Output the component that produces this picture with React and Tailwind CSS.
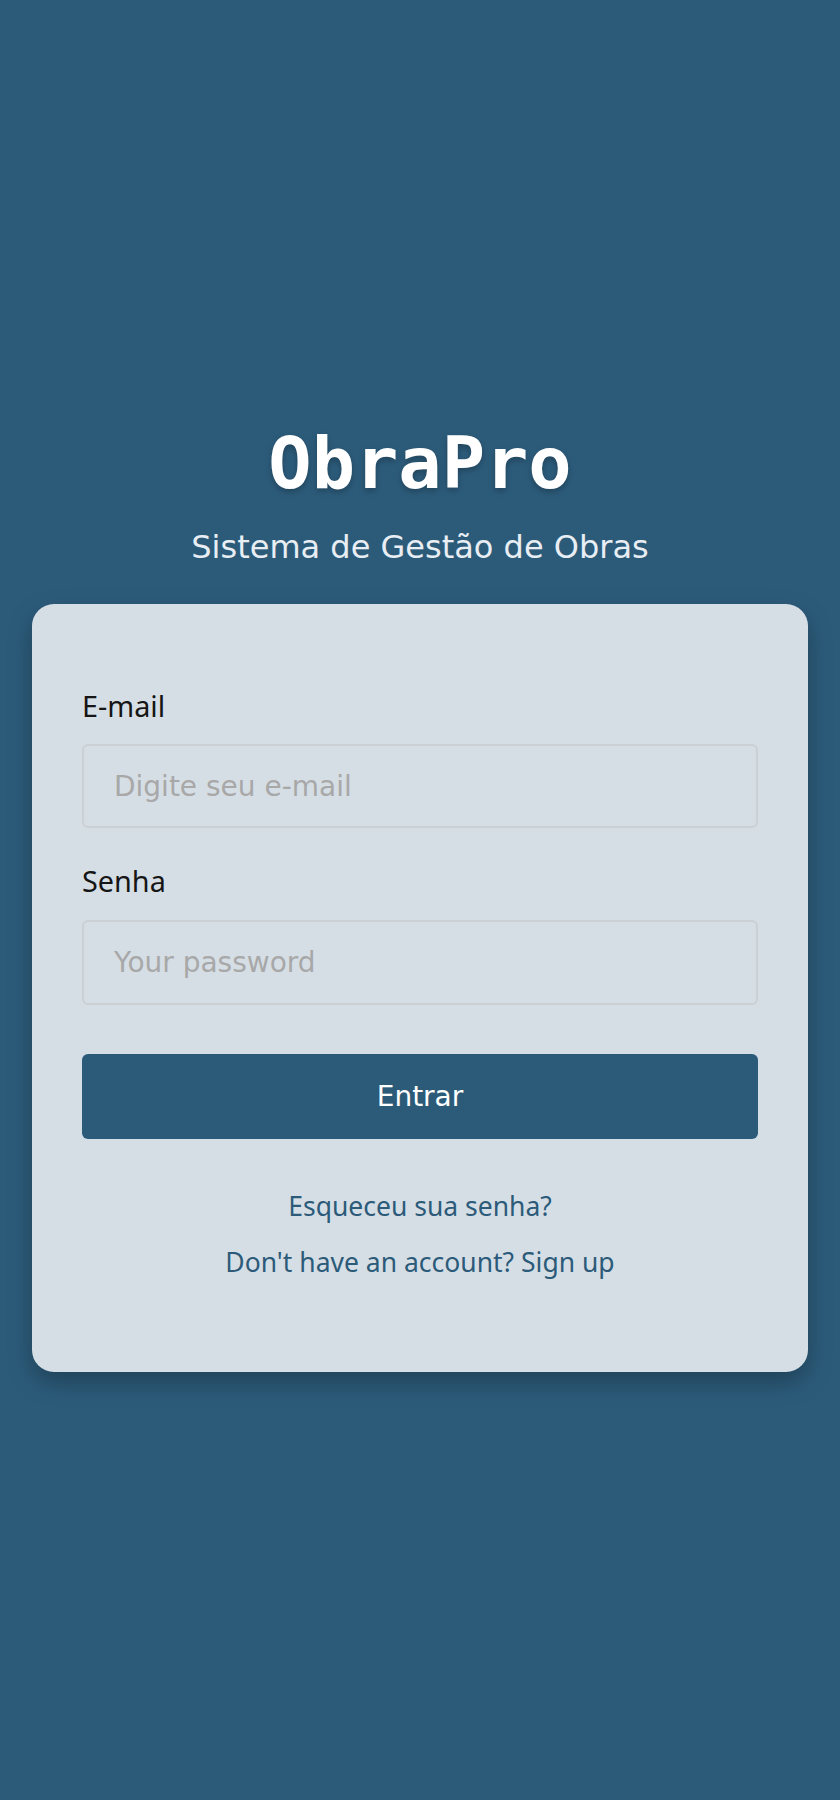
import React, { useState } from 'react';

const App = () => {
  const [email, setEmail] = useState('');
  const [password, setPassword] = useState('');

  return (
    <div className="min-h-[1800px] bg-[#2c5b7a] px-8 pt-[423px] pb-10 font-['DejaVu_Sans',sans-serif]">
      {/* cabeçalho */}
      <div className="flex flex-col items-center">
        <h1 className="text-[72px] leading-[80px] font-bold text-white font-['DejaVu_Sans_Mono','Liberation_Mono',monospace] [text-shadow:0_3px_6px_rgba(0,0,0,0.25)]">
          ObraPro
        </h1>
        <p className="mt-6 text-[32px] leading-[40px] text-[#e8eef3]">
          Sistema de Gestão de Obras
        </p>
      </div>

      {/* cartão de login */}
      <div className="mt-[37px] bg-[#d6dee5] rounded-[22px] px-[50px] pt-[82px] pb-[92px] shadow-[0_10px_24px_rgba(0,0,0,0.28)]">
        <form onSubmit={(e) => e.preventDefault()} className="flex flex-col">
          <label htmlFor="email" className="text-[28.8px] leading-[40px] text-[#151515] font-['Noto_Sans',sans-serif]">
            E-mail
          </label>
          <input
            id="email"
            type="email"
            value={email}
            onChange={(e) => setEmail(e.target.value)}
            placeholder="Digite seu e-mail"
            className="mt-[18px] h-[84px] w-full rounded-md border-2 border-[#cbd0d4] bg-transparent px-[30px] text-[28px] text-[#222] placeholder:text-[#a8a8a8] outline-none"
          />

          <label htmlFor="password" className="mt-[33px] text-[28.8px] leading-[40px] text-[#151515] font-['Noto_Sans',sans-serif]">
            Senha
          </label>
          <input
            id="password"
            type="password"
            value={password}
            onChange={(e) => setPassword(e.target.value)}
            placeholder="Your password"
            className="mt-[19px] h-[85px] w-full rounded-md border-2 border-[#cbd0d4] bg-transparent px-[30px] text-[28px] text-[#222] placeholder:text-[#a8a8a8] outline-none"
          />

          <button type="submit" className="mt-[49px] h-[85px] w-full rounded-md bg-[#2c5b7a] text-[28px] text-white">
            Entrar
          </button>
        </form>

        <div className="mt-[49px] flex flex-col items-center gap-5 text-[26.5px] leading-[36px] text-[#2c5b7a] font-['Noto_Sans',sans-serif]">
          <a href="#">Esqueceu sua senha?</a>
          <a href="#">Don't have an account? Sign up</a>
        </div>
      </div>
    </div>
  );
};

export default App;
